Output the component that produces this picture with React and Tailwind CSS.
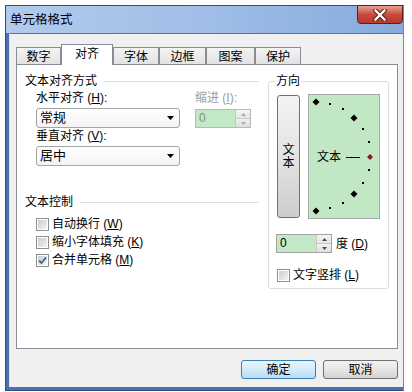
import React from "react";

function Checkbox({ checked }) {
  return (
    <div className="w-[13px] h-[13px] border border-[#8e8f8f] bg-white p-[1px] shrink-0">
      <div className="w-full h-full bg-gradient-to-br from-[#c9ccd1] to-[#f3f3f3] flex items-center justify-center">
        {checked && (
          <svg width="9" height="9" viewBox="0 0 9 9">
            <path d="M1.2 4.6 L3.5 7 L8 1.5" fill="none" stroke="#3e5c9a" strokeWidth="1.8" />
          </svg>
        )}
      </div>
    </div>
  );
}

function Select({ value }) {
  return (
    <div className="w-[144px] h-[20px] border border-[#a5a5a5] rounded-[3px] bg-gradient-to-b from-[#ffffff] to-[#f3f3f3] flex items-center pl-[3px] pr-[5px]">
      <span className="flex-1 text-[13px] leading-[14px]">{value}</span>
      <svg width="7" height="4" viewBox="0 0 7 4">
        <polygon points="0,0 7,0 3.5,4" fill="#000" />
      </svg>
    </div>
  );
}

function Spin({ disabled }) {
  const c = disabled ? "#a9a9a9" : "#4d4d4d";
  return (
    <div className={`w-[56px] h-[19px] border ${disabled ? "border-[#b9b9b9]" : "border-[#a3a3a3]"} bg-[#c3e8c7] flex`}>
      <span className={`flex-1 pl-[3px] text-[12px] leading-[17px] ${disabled ? "text-[#8a8a8a]" : "text-black"}`}>0</span>
      <div className="w-[15px] flex flex-col border-l border-[#c8c8c8]">
        <div className="flex-1 bg-gradient-to-b from-[#f6f6f6] to-[#e4e4e4] border-b border-[#c8c8c8] flex items-center justify-center">
          <svg width="5" height="3" viewBox="0 0 5 3"><polygon points="0,3 5,3 2.5,0" fill={c} /></svg>
        </div>
        <div className="flex-1 bg-gradient-to-b from-[#f1f1f1] to-[#dedede] flex items-center justify-center">
          <svg width="5" height="3" viewBox="0 0 5 3"><polygon points="0,0 5,0 2.5,3" fill={c} /></svg>
        </div>
      </div>
    </div>
  );
}

function Diamond({ x, y, r = 3.5, fill = "#000" }) {
  return <polygon points={`${x},${y - r} ${x + r},${y} ${x},${y + r} ${x - r},${y}`} fill={fill} />;
}

function Dial() {
  const big = [[8, 8], [46, 24], [46, 100], [8, 117]];
  const small = [[22, 10], [35, 15], [55, 35], [61, 48], [61, 76], [55, 89], [35, 109], [22, 114]];
  return (
    <div className="relative w-[72px] h-[125px] -mt-px ml-[8px] border border-[#a8a8a8] bg-[#c1e7c5]">
      <svg className="absolute left-0 top-0" width="70" height="123" viewBox="0 0 70 123">
        {big.map(([x, y], i) => <Diamond key={i} x={x - 1} y={y - 1} />)}
        {small.map(([x, y], i) => <rect key={i} x={x - 2} y={y - 2} width="2" height="2" fill="#000" />)}
        <line x1="37" y1="62.5" x2="51" y2="62.5" stroke="#000" strokeWidth="1" />
        <Diamond x={61} y={62} r={3} fill="#8b1c1c" />
      </svg>
      <span className="absolute left-[8px] top-[55px] text-[12px] leading-[14px]">文本</span>
    </div>
  );
}

const U = ({ children }) => <span className="underline underline-offset-1">{children}</span>;

export default function App() {
  const tabs = [
    ["数字", "w-[45px]"],
    ["对齐", "w-[52px]"],
    ["字体", "w-[46px]"],
    ["边框", "w-[47px]"],
    ["图案", "w-[49px]"],
    ["保护", "w-[46px]"],
  ];
  return (
    <div className="w-[412px] h-[392px] bg-white pl-[5px] pt-[5px] font-['Liberation_Sans','Noto_Sans_CJK_SC',sans-serif] text-[12px] leading-[14px] text-black">
      <div className="w-[399px] h-[386px] flex flex-col bg-[#4a71ae] border border-[#2f4f82] border-r-[#7a8798]">
        {/* title bar */}
        <div className="h-[27px] shrink-0 flex items-start bg-gradient-to-r from-[#b0cbed] via-[#a0bee7] to-[#86abdc]">
          <div className="flex-1 pl-[4px] pt-[7px] text-[12.5px] leading-[14px] text-black">单元格格式</div>
          <div className="-mt-px w-[46px] h-[19px] rounded-b-[4px] border border-[#5a1f1f] bg-gradient-to-b from-[#e6a294] via-[#c9493b] to-[#b73a2c] flex items-center justify-center">
            <svg width="14" height="12" viewBox="0 0 14 12">
              <path d="M2.5 1.5 L11.5 10.5 M11.5 1.5 L2.5 10.5" stroke="#4a1a14" strokeWidth="4.2" strokeLinecap="square" />
              <path d="M2.5 1.5 L11.5 10.5 M11.5 1.5 L2.5 10.5" stroke="#ffffff" strokeWidth="2.4" strokeLinecap="square" />
            </svg>
          </div>
        </div>
        {/* client */}
        <div className="flex-1 ml-[3px] mb-[3px] bg-[#f0f0f0] border-t border-[#5c7196] border-l border-l-[#dfe6ef] pl-[6px] pr-[5px] pt-[10px] flex flex-col">
          {/* tabs */}
          <div className="h-[20px] flex items-end">
            {tabs.map(([t, w], i) =>
              i === 1 ? (
                <div key={t} className={`${w} h-[21px] -mb-px relative z-10 bg-white border border-b-0 border-[#898c95] flex justify-center pt-[2px] text-[12px] leading-[14px]`}>
                  {t}
                </div>
              ) : (
                <div key={t} className={`${w} h-[17px] bg-gradient-to-b from-[#f4f4f4] to-[#e2e2e2] border border-b-0 border-[#898c95] flex justify-center pt-[2px] text-[12px] leading-[14px]`}>
                  {t}
                </div>
              )
            )}
          </div>
          {/* panel */}
          <div className="h-[285px] bg-white border border-[#898c95] flex items-start">
            {/* left column */}
            <div className="w-[242px] pl-[8px] pt-[9px] flex flex-col">
              <div className="h-[14px] flex items-center">
                <span>文本对齐方式</span>
                <div className="flex-1 h-px bg-[#d5dfe5] ml-[6px]" />
              </div>
              <div className="pl-[11px] flex">
                <div className="w-[144px] flex flex-col">
                  <div className="mt-[3px] h-[14px]">水平对齐 (<U>H</U>):</div>
                  <div className="mt-[3px]"><Select value="常规" /></div>
                  <div className="mt-[1px] h-[14px]">垂直对齐 (<U>V</U>):</div>
                  <div className="mt-[3px]"><Select value="居中" /></div>
                </div>
                <div className="ml-[15px] flex flex-col">
                  <div className="mt-[3px] h-[14px] text-[#9c9c9c]">缩进 (<U>I</U>):</div>
                  <div className="mt-[4px]"><Spin disabled /></div>
                </div>
              </div>
              <div className="mt-[29px] h-[14px] flex items-center">
                <span>文本控制</span>
                <div className="flex-1 h-px bg-[#d5dfe5] ml-[7px]" />
              </div>
              <div className="mt-[6px] pl-[11px] flex flex-col">
                <div className="h-[18px] flex items-center gap-[3px]"><Checkbox /><span>自动换行 (<U>W</U>)</span></div>
                <div className="h-[18px] flex items-center gap-[3px]"><Checkbox /><span>缩小字体填充 (<U>K</U>)</span></div>
                <div className="h-[18px] flex items-center gap-[3px]"><Checkbox checked /><span>合并单元格 (<U>M</U>)</span></div>
              </div>
            </div>
            {/* orientation group */}
            <fieldset className="ml-[9px] mt-[9px] w-[121px] border border-[#d5dfe5] rounded-[3px] pl-[7px] pt-[7px] pb-[6px]">
              <legend className="ml-[-1px] px-[1px] text-[12px] leading-[14px]">方向</legend>
              <div className="flex items-start">
                <div className="ml-[1px] w-[23px] h-[123px] rounded-[3px] border border-[#707070] bg-gradient-to-b from-[#f3f3f3] via-[#e3e3e3] to-[#cdcdcd] flex flex-col items-center justify-center">
                  <span className="block h-[13px] leading-[13px]">文</span>
                  <span className="block h-[13px] leading-[13px]">本</span>
                </div>
                <Dial />
              </div>
              <div className="mt-[15px] flex items-center">
                <Spin />
                <span className="ml-[4px]">度 (<U>D</U>)</span>
              </div>
              <div className="mt-[15px] h-[14px] ml-[1px] flex items-center gap-[3px]">
                <Checkbox />
                <span>文字竖排 (<U>L</U>)</span>
              </div>
            </fieldset>
          </div>
          {/* buttons */}
          <div className="mt-[11px] flex justify-end gap-[7px]">
            <div className="w-[75px] h-[19px] rounded-[3px] border border-[#3c7fb1] bg-gradient-to-b from-[#e8f5fc] via-[#d4ecfa] to-[#b5ddf5] flex items-center justify-center">确定</div>
            <div className="w-[75px] h-[19px] rounded-[3px] border border-[#707070] bg-gradient-to-b from-[#f2f2f2] via-[#e6e6e6] to-[#d2d2d2] flex items-center justify-center">取消</div>
          </div>
        </div>
      </div>
    </div>
  );
}
